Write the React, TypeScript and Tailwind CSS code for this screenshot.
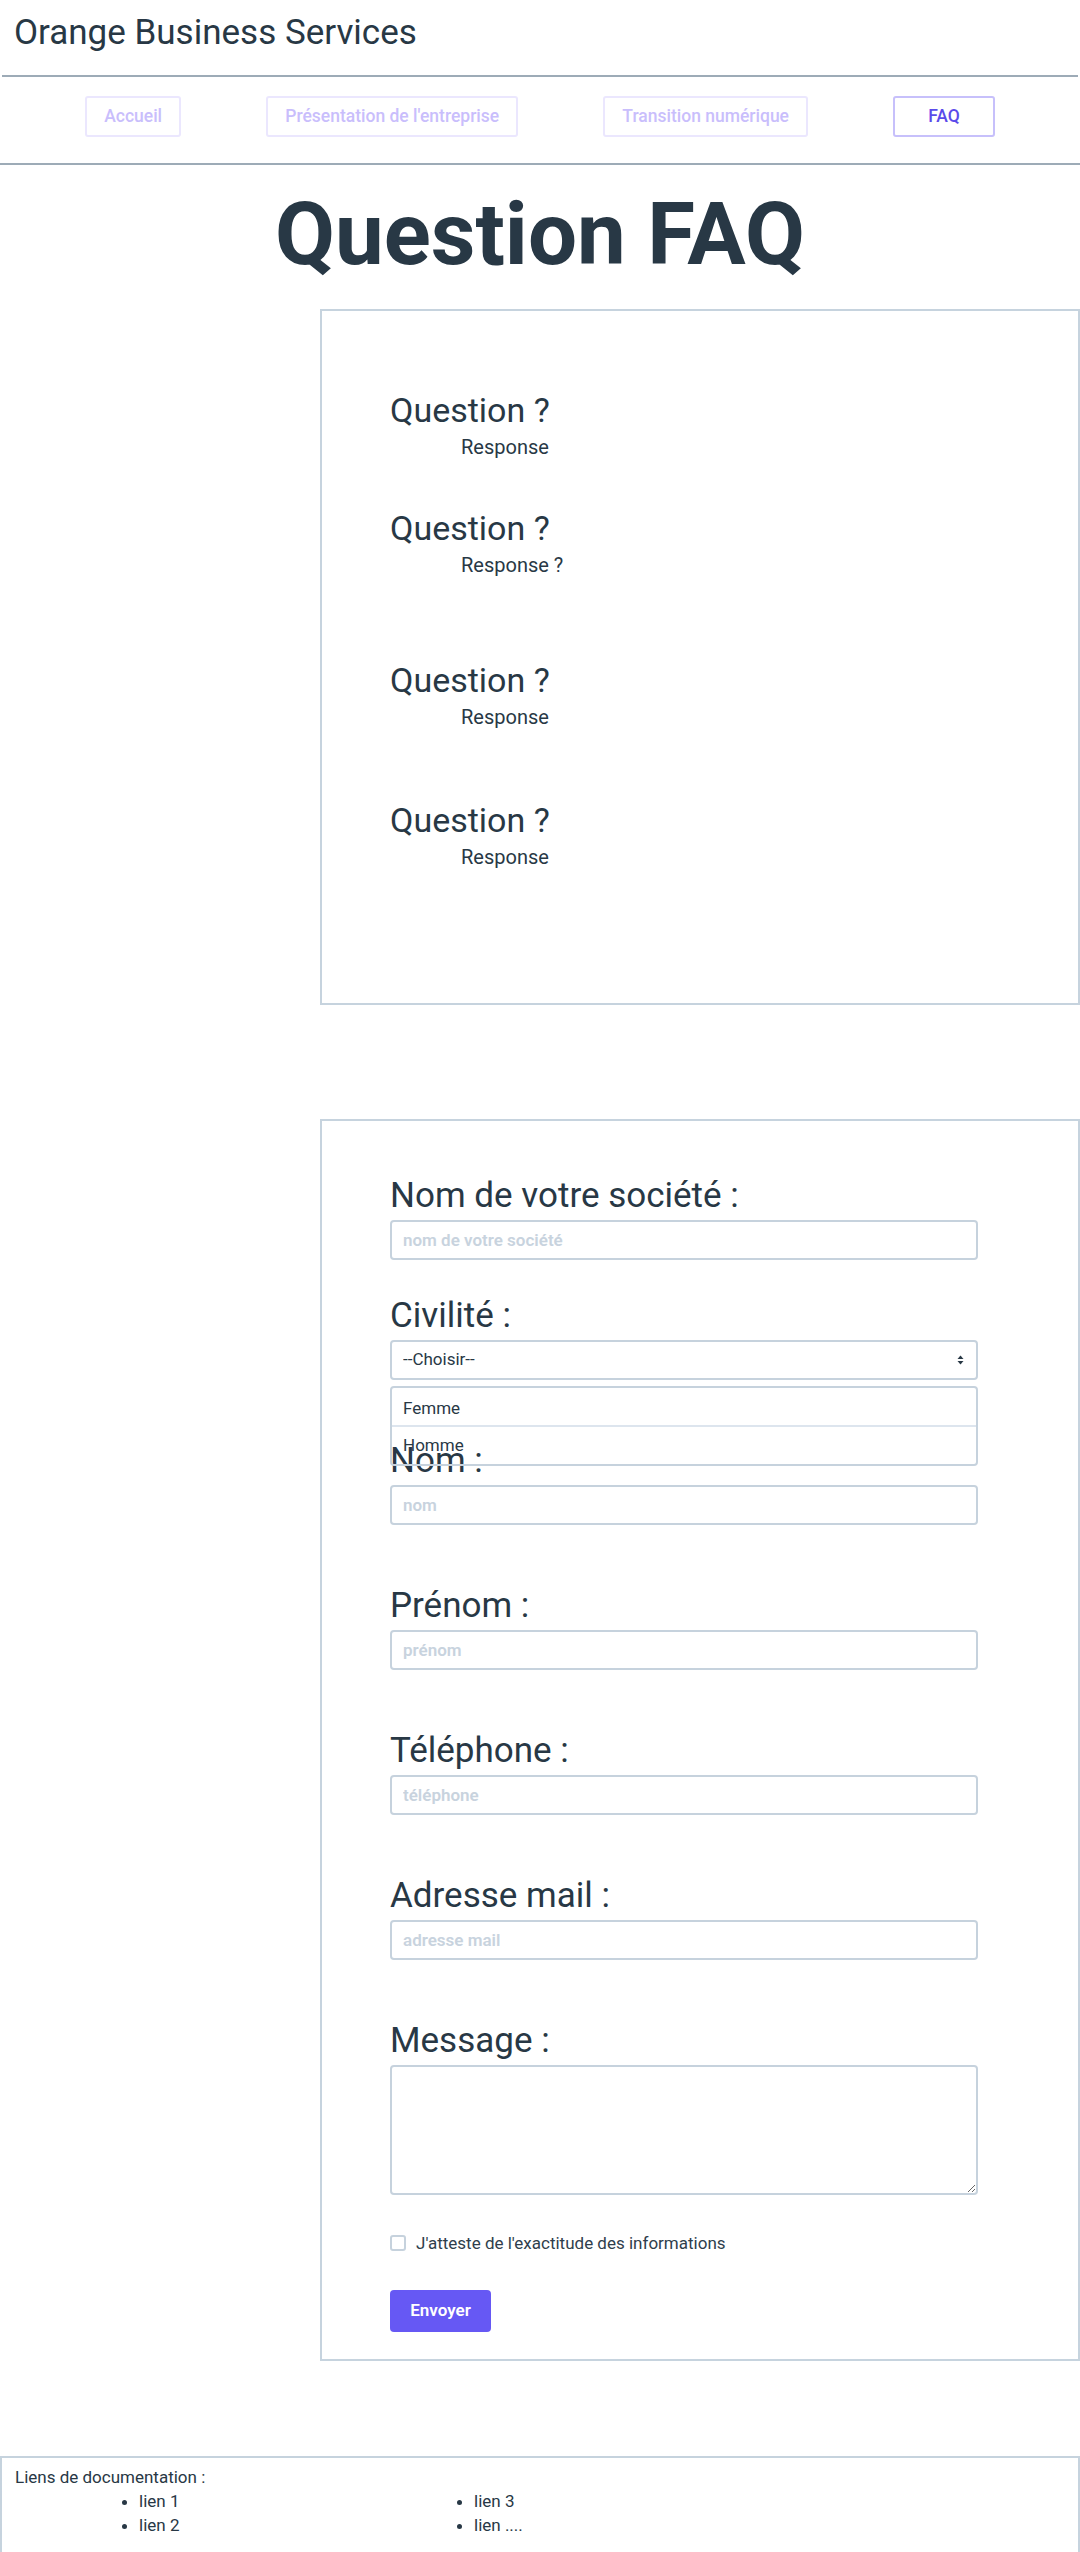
import React from "react"

const navItems = [
    { label: "Accueil", active: false },
    { label: "Présentation de l'entreprise", active: false },
    { label: "Transition numérique", active: false },
    { label: "FAQ", active: true },
]

const faq = [
    { q: "Question ?", r: "Response", mt: "mt-[79px]" },
    { q: "Question ?", r: "Response ?", mt: "mt-[49px]" },
    { q: "Question ?", r: "Response", mt: "mt-[83px]" },
    { q: "Question ?", r: "Response", mt: "mt-[71px]" },
]

const fields = [
    { label: "Nom de votre société :", placeholder: "nom de votre société" },
    { label: "Nom :", placeholder: "nom" },
    { label: "Prénom :", placeholder: "prénom" },
    { label: "Téléphone :", placeholder: "téléphone" },
    { label: "Adresse mail :", placeholder: "adresse mail" },
]

function Field({ label, placeholder, className }: { label: string; placeholder: string; className?: string }) {
    return (
        <div className={className}>
            <label className="block text-[35px] leading-[40px] text-[#283845]">{label}</label>
            <input
                placeholder={placeholder}
                className="mt-[4px] block h-[40px] w-[588px] rounded-[4px] border-2 border-[#c6d2dd] px-[11px] text-[17px] font-semibold text-[#283845] outline-none placeholder:text-[#c8d3de]"
            />
        </div>
    )
}

export default function App() {
    return (
        <div className="w-[1080px] overflow-hidden bg-white font-['Roboto',sans-serif] text-[#283845]">
            <header className="h-[75px]">
                <h1 className="pl-[14px] pt-[13px] text-[35px] leading-[40px]">Orange Business Services</h1>
            </header>
            <div className="mx-[2px] border-t-2 border-[#9dabb7]" />
            <nav className="flex justify-evenly pb-[26px] pt-[19px]">
                {navItems.map((item) => (
                    <a
                        key={item.label}
                        className={
                            item.active
                                ? "flex h-[41px] items-center rounded-[3px] border-2 border-[#c7c0fb] px-[33px] text-[17.5px] font-medium text-[#5b4bea]"
                                : "flex h-[41px] items-center rounded-[3px] border-2 border-[#ebe7fe] px-[17px] text-[17.5px] font-medium text-[#c9befc]"
                        }
                    >
                        {item.label}
                    </a>
                ))}
            </nav>
            <div className="border-t-2 border-[#9dabb7]" />

            <h2 className="mt-[26px] text-center text-[87px] font-bold leading-[87px] text-[#283845]">Question FAQ</h2>

            <section className="ml-[320px] mt-[31px] h-[696px] w-[760px] border-2 border-[#c6d3de] pl-[68px]">
                {faq.map((item, i) => (
                    <div key={i} className={item.mt}>
                        <h3 className="text-[34px] leading-[40px]">{item.q}</h3>
                        <p className="ml-[71px] mt-[5px] text-[20px] leading-[24px]">{item.r}</p>
                    </div>
                ))}
            </section>

            <form className="ml-[320px] mt-[114px] w-[760px] border-2 border-[#c6d3de] pb-[27px] pl-[68px] pt-[55px]">
                <Field {...fields[0]} />
                <div className="relative mt-[36px]">
                    <label className="block text-[35px] leading-[40px]">Civilité :</label>
                    <div className="relative mt-[4px] w-[588px]">
                        <select className="block h-[40px] w-full appearance-none rounded-[4px] border-2 border-[#c6d2dd] bg-white px-[11px] text-[17px] text-[#283845] outline-none">
                            <option>--Choisir--</option>
                            <option>Femme</option>
                            <option>Homme</option>
                        </select>
                        <svg className="pointer-events-none absolute right-[14px] top-[15px]" width="7" height="10" viewBox="0 0 7 10">
                            <path d="M3.5 0.5 L6.5 4 H0.5 Z" fill="#283845" />
                            <path d="M3.5 9.5 L6.5 6 H0.5 Z" fill="#283845" />
                        </svg>
                        <ul className="absolute left-0 top-[46px] z-10 w-full rounded-[4px] border-2 border-[#c6d2dd] text-[17px]">
                            <li className="h-[39px] border-b-2 border-[#dde5ee] px-[11px] pt-[10px] leading-[20px]">Femme</li>
                            <li className="h-[37px] px-[11px] pt-[8px] leading-[20px]">Homme</li>
                        </ul>
                    </div>
                </div>
                {fields.slice(1).map((f) => (
                    <Field key={f.label} {...f} className="mt-[61px]" />
                ))}
                <div className="mt-[61px]">
                    <label className="block text-[35px] leading-[40px]">Message :</label>
                    <textarea className="mt-[4px] block h-[130px] w-[588px] rounded-[4px] border-2 border-[#c6d2dd] outline-none" />
                </div>
                <label className="mt-[38px] flex items-center gap-[10px] text-[17px] leading-[20px] text-[#2f3e4c]">
                    <input type="checkbox" className="h-[16px] w-[16px] appearance-none rounded-[3px] border-2 border-[#c6d2dd]" />
                    J'atteste de l'exactitude des informations
                </label>
                <button
                    type="button"
                    className="mt-[37px] h-[42px] w-[101px] rounded-[4px] bg-[#6658f4] text-[17px] font-semibold text-white"
                >
                    Envoyer
                </button>
            </form>

            <footer className="mt-[95px] h-[97px] border-l-2 border-r-2 border-t-2 border-[#c6d3de] pl-[13px] pt-[7px] text-[17px] leading-[24px] text-[#283845]">
                <p>Liens de documentation :</p>
                <div className="flex pl-[109px]">
                    <ul className="w-[335px] list-disc pl-[15px]">
                        <li>lien 1</li>
                        <li>lien 2</li>
                    </ul>
                    <ul className="list-disc pl-[15px]">
                        <li>lien 3</li>
                        <li>lien ....</li>
                    </ul>
                </div>
            </footer>
        </div>
    )
}
